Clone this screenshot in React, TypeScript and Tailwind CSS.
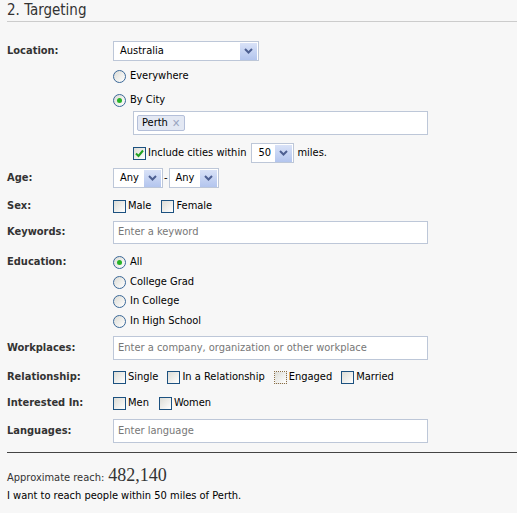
import React from "react";

const font = { fontFamily: '"DejaVu Sans Condensed", "Liberation Sans", sans-serif' };

function Arrow() {
  return (
    <span className="flex h-[17px] w-[17px] items-center justify-center bg-gradient-to-b from-[#d9e2f7] to-[#b3c5ee]">
      <svg width="9" height="6" viewBox="0 0 9 6">
        <path d="M1 1 L4.5 4.5 L8 1" stroke="#4d5f91" strokeWidth="2" fill="none" />
      </svg>
    </span>
  );
}

function Select({ value, w }: { value: string; w: string }) {
  return (
    <div className={`flex h-[20px] ${w} items-center justify-between border border-[#bdc7d8] bg-white pl-[6px] pr-px text-[11px] text-black`}>
      <span>{value}</span>
      <Arrow />
    </div>
  );
}

function Radio({ label, on }: { label: string; on?: boolean }) {
  return (
    <div className="flex h-[14px] items-center gap-[4px] text-[11px] text-black">
      <span className="flex h-[13px] w-[13px] items-center justify-center rounded-full border border-[#3a6898] bg-gradient-to-br from-[#dcdcd6] to-white">
        {on && <span className="h-[5px] w-[5px] rounded-full bg-[#27b327]" />}
      </span>
      <span>{label}</span>
    </div>
  );
}

function Check({ label, on, focus }: { label: string; on?: boolean; focus?: boolean }) {
  return (
    <div className="flex h-[14px] items-center gap-[2px] text-[11px] text-black">
      <span
        className={`flex h-[13px] w-[13px] items-center justify-center bg-gradient-to-br from-[#dcdcd6] to-white ${
          focus ? "border border-dotted border-[#8a6d45]" : "border border-[#1c5180]"
        }`}
      >
        {on && (
          <svg width="9" height="9" viewBox="0 0 9 9">
            <path d="M1 4.5 L3.5 7 L8 1.5" stroke="#21a121" strokeWidth="2" fill="none" />
          </svg>
        )}
      </span>
      <span>{label}</span>
    </div>
  );
}

function Input({ placeholder, h = "h-[24px]" }: { placeholder: string; h?: string }) {
  return (
    <div className={`flex ${h} w-[315px] items-center border border-[#bdc7d8] bg-white px-[4px] text-[11px] text-[#777]`}>
      {placeholder}
    </div>
  );
}

function Row({ label, lh, mt, children }: { label: string; lh: string; mt: string; children: React.ReactNode }) {
  return (
    <div className={`flex items-start ${mt}`}>
      <div className={`flex ${lh} w-[106px] shrink-0 items-center text-[11px] font-bold text-[#333]`}>{label}</div>
      <div className="flex flex-col">{children}</div>
    </div>
  );
}

export default function App() {
  return (
    <div className="min-h-screen w-[517px] bg-[#f7f7f7] pl-[7px]" style={font}>
      <div className="h-[22px] border-b border-[#cccccc] pt-[1px] text-[15px] leading-[18px] text-[#333]">
        2. Targeting
      </div>

      <Row label="Location:" lh="h-[20px]" mt="mt-[19px]">
        <Select value="Australia" w="w-[146px]" />
        <div className="mt-[8px]">
          <Radio label="Everywhere" />
        </div>
        <div className="mt-[10px]">
          <Radio label="By City" on />
        </div>
        <div className="mt-[4px] ml-[20px] flex h-[24px] w-[295px] items-center border border-[#bdc7d8] bg-white px-[3px]">
          <span className="flex h-[16px] items-center gap-[4px] rounded-[2px] border border-[#b4bfd9] bg-[#e3e8f3] px-[4px] text-[11px] text-black">
            Perth
            <span className="text-[11px] font-bold leading-none text-[#9aa5c0]">✕</span>
          </span>
        </div>
        <div className="mt-[8px] ml-[20px] flex h-[20px] items-center">
          <Check label="Include cities within" on />
          <div className="ml-[5px]">
            <Select value="50" w="w-[43px]" />
          </div>
          <span className="ml-[3px] text-[11px] text-black">miles.</span>
        </div>
      </Row>

      <Row label="Age:" lh="h-[20px]" mt="mt-[5px]">
        <div className="flex items-center">
          <Select value="Any" w="w-[50px]" />
          <span className="mx-[1px] text-[11px] text-black">-</span>
          <Select value="Any" w="w-[50px]" />
        </div>
      </Row>

      <Row label="Sex:" lh="h-[14px]" mt="mt-[11px]">
        <div className="flex items-center gap-[10px]">
          <Check label="Male" />
          <Check label="Female" />
        </div>
      </Row>

      <Row label="Keywords:" lh="h-[23px]" mt="mt-[8px]">
        <Input placeholder="Enter a keyword" h="h-[23px]" />
      </Row>

      <Row label="Education:" lh="h-[14px]" mt="mt-[11px]">
        <Radio label="All" on />
        <div className="mt-[6px]">
          <Radio label="College Grad" />
        </div>
        <div className="mt-[5px]">
          <Radio label="In College" />
        </div>
        <div className="mt-[6px]">
          <Radio label="In High School" />
        </div>
      </Row>

      <Row label="Workplaces:" lh="h-[24px]" mt="mt-[8px]">
        <Input placeholder="Enter a company, organization or other workplace" />
      </Row>

      <Row label="Relationship:" lh="h-[14px]" mt="mt-[10px]">
        <div className="flex items-center gap-[9px]">
          <Check label="Single" />
          <Check label="In a Relationship" />
          <Check label="Engaged" focus />
          <Check label="Married" />
        </div>
      </Row>

      <Row label="Interested In:" lh="h-[14px]" mt="mt-[12px]">
        <div className="flex items-center gap-[10px]">
          <Check label="Men" />
          <Check label="Women" />
        </div>
      </Row>

      <Row label="Languages:" lh="h-[24px]" mt="mt-[9px]">
        <Input placeholder="Enter language" />
      </Row>

      <div className="mt-[9px] border-t border-[#444]" />

      <div className="mt-[11px] flex h-[22px] items-baseline text-[11px] leading-[22px] text-[#333]">
        <span>Approximate reach:</span>
        <span className="ml-[4px] text-[18px] text-[#333]" style={{ fontFamily: '"Liberation Serif", serif' }}>
          482,140
        </span>
      </div>
      <div className="mt-[2px] text-[11px] leading-[16px] text-black">I want to reach people within 50 miles of Perth.</div>
    </div>
  );
}
